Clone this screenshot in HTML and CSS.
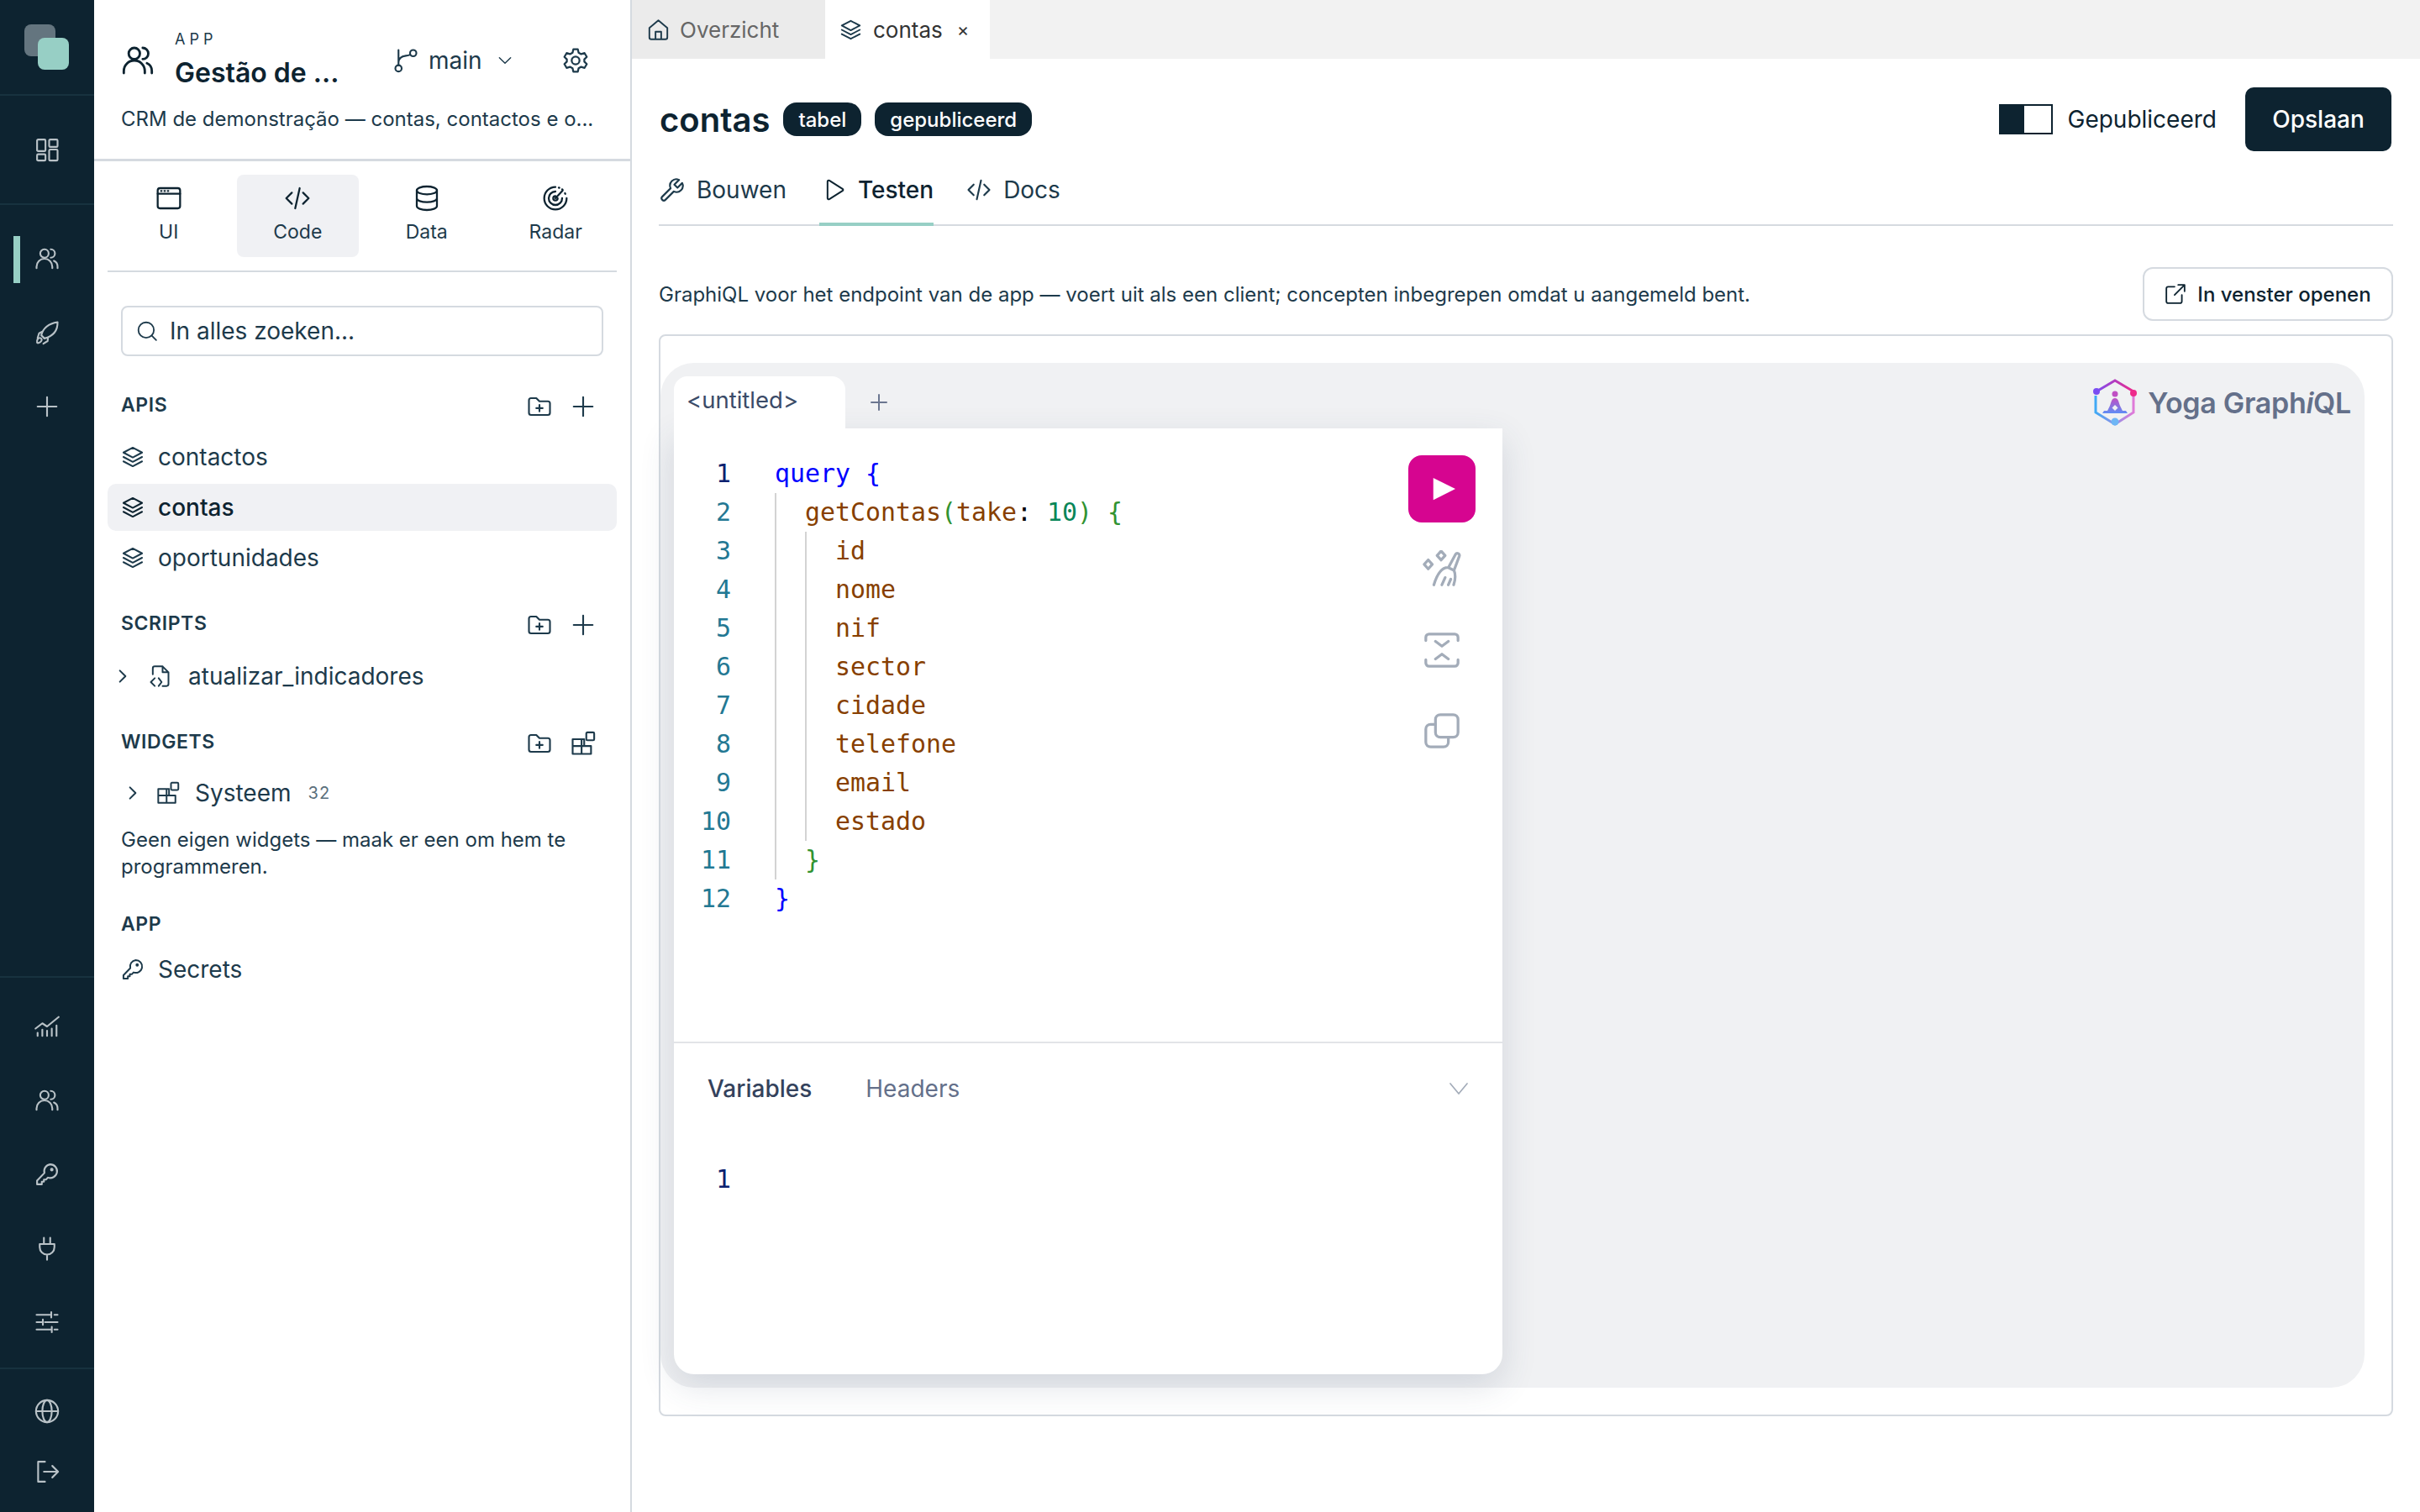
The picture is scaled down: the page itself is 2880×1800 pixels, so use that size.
FILE: index.html
```html
<!DOCTYPE html>
<html lang="nl">
<head>
    <meta charset="UTF-8">
    <title>contas</title>
    <link rel="stylesheet" href="styles.css">
</head>
<body>
    <!-- Shared icons -->
    <svg class="icon-defs" xmlns="http://www.w3.org/2000/svg">
        <defs>
            <symbol id="i-users" viewBox="0 0 24 24"><circle cx="9.500" cy="7" r="4"/><path d="M15.500 3a4 4 0 0 1 0 8M2 21v-1.500a7.500 7.500 0 0 1 15 0V21M18.500 14a6 6 0 0 1 3.500 5.500V21"/></symbol>
            <symbol id="i-layers" viewBox="0 0 24 24"><path d="M12 2.500 21.500 7.500 12 12.500 2.500 7.500zM2.500 12 12 17l9.500-5M2.500 16.500l9.500 5 9.500-5"/></symbol>
            <symbol id="i-folder" viewBox="0 0 24 24"><path d="M2 6a2 2 0 0 1 2-2h5l3 3h8a2 2 0 0 1 2 2v9a2 2 0 0 1-2 2H4a2 2 0 0 1-2-2zM12 10.500v6M9 13.500h6"/></symbol>
            <symbol id="i-plus" viewBox="0 0 24 24"><path d="M12 3v18M3 12h18"/></symbol>
            <symbol id="i-code" viewBox="0 0 24 24"><path d="M7 7l-5 5 5 5M17 7l5 5-5 5M14 3l-4 18"/></symbol>
            <symbol id="i-key" viewBox="0 0 24 24"><path d="M15 2.500a6.500 6.500 0 1 1-2.200 12.600L11 17H9v2H7v2.500H2.500V18l7-7.300A6.500 6.500 0 0 1 15 2.500z"/><circle cx="16.500" cy="7.500" r=".8"/></symbol>
            <symbol id="i-blocks" viewBox="0 0 24 24"><path d="M2 8h11v6.500h6.500V22H2zM2 14.500h17.500M10.500 8v14"/><rect x="15" y="1.500" width="7.500" height="7.500" rx="1"/></symbol>
            <symbol id="i-chevron" viewBox="0 0 24 24"><path d="M8 4l8 8-8 8"/></symbol>
        </defs>
    </svg>

    <div class="app">
        <nav class="rail">
            <div class="rail-logo"><span class="logo-back"></span><span class="logo-front"></span></div>
            <div class="rail-group rail-home">
                <a class="rail-item"><svg class="ic" viewBox="0 0 24 24"><rect x="2.500" y="2.500" width="8" height="11" rx="1"/><rect x="14" y="2.500" width="8" height="7" rx="1"/><rect x="2.500" y="16.500" width="8" height="6" rx="1"/><rect x="14" y="12" width="8" height="10.500" rx="1"/></svg></a>
            </div>
            <div class="rail-group rail-apps">
                <a class="rail-item active"><svg class="ic"><use href="#i-users"/></svg></a>
                <a class="rail-item"><svg class="ic" viewBox="0 0 24 24"><path d="M9.500 17.500 6.500 14.500C8 8.500 13 3.500 22 2c.2 8.500-5 13.500-12.500 15.500zM7.500 11 4.500 12.500 3 17M13 16.500 12.500 20 8.500 22.500"/><path d="M2.500 21.500c-.5-2.500 1-4.500 2.500-4.500s2.500 1.500 1.500 3-3.500 2.500-4 1.500z"/></svg></a>
                <a class="rail-item"><svg class="ic thin"><use href="#i-plus"/></svg></a>
            </div>
            <div class="rail-group rail-admin">
                <a class="rail-item"><svg class="ic" viewBox="0 0 24 24"><path d="M1 14 7.500 9l4.500 3L23 3M3 21v-3M7.500 21v-6M12 21v-5M16.500 21v-7M21 21V11"/></svg></a>
                <a class="rail-item"><svg class="ic"><use href="#i-users"/></svg></a>
                <a class="rail-item"><svg class="ic"><use href="#i-key"/></svg></a>
                <a class="rail-item"><svg class="ic" viewBox="0 0 24 24"><path d="M9 2v6M15 2v6M5 8h14v3a7 7 0 0 1-14 0zM12 18v5"/></svg></a>
                <a class="rail-item"><svg class="ic" viewBox="0 0 24 24"><path d="M2 5h14M19 5h3M16 2.500v5M2 12h5M10 12h12M8 9.500v5M2 19h14M19 19h3M16.500 16.500v5"/></svg></a>
            </div>
            <div class="rail-group rail-bottom">
                <a class="rail-item short"><svg class="ic" viewBox="0 0 24 24"><circle cx="12" cy="12" r="10.500"/><ellipse cx="12" cy="12" rx="4.500" ry="10.500"/><path d="M1.500 12h21"/></svg></a>
                <a class="rail-item short"><svg class="ic" viewBox="0 0 24 24"><path d="M10 2.500H3.500v19H10M9 12h13M17 6.500l5.500 5.500-5.500 5.500"/></svg></a>
            </div>
        </nav>

        <aside class="sidebar">
            <div class="app-head">
                <div class="app-row">
                    <svg class="ic head-icon"><use href="#i-users"/></svg>
                    <div class="app-titles">
                        <div class="app-label">APP</div>
                        <div class="app-name">Gestão de ...</div>
                    </div>
                    <div class="branch">
                        <svg class="ic branch-icon" viewBox="0 0 24 24"><circle cx="5" cy="19.500" r="3"/><circle cx="19" cy="5" r="3"/><path d="M5 16.500V2M5 14c0-4 3-6 7-6.500 2-.2 3.500-.7 4-1"/></svg>
                        <span>main</span>
                        <svg class="ic chev-down" viewBox="0 0 24 24"><path d="M4 8l8 8 8-8"/></svg>
                    </div>
                    <svg class="ic gear" viewBox="0 0 24 24"><circle cx="12" cy="12" r="3.500"/><path d="M10 2h4l.7 3 2.300 1.300 3-.9 2 3.400-2.200 2.200v2l2.200 2.200-2 3.400-3-.9L14.700 19l-.7 3h-4l-.7-3L7 17.700l-3 .9-2-3.400L4.200 13v-2L2 8.800l2-3.400 3 .9L9.300 5z"/></svg>
                </div>
                <p class="app-desc">CRM de demonstração — contas, contactos e o...</p>
            </div>

            <div class="mode-tabs">
                <a class="mode-tab">
                    <svg class="ic" viewBox="0 0 24 24"><rect x="2" y="3" width="20" height="18" rx="2"/><path d="M2 8h20M5 5.500h.5M8 5.500h.5M11 5.500h.5"/></svg>
                    UI
                </a>
                <a class="mode-tab active"><svg class="ic"><use href="#i-code"/></svg>Code</a>
                <a class="mode-tab">
                    <svg class="ic" viewBox="0 0 24 24"><ellipse cx="12" cy="5" rx="9" ry="3.500"/><path d="M3 5v14c0 2 4 3.500 9 3.500s9-1.500 9-3.500V5M3 12c0 2 4 3.500 9 3.500s9-1.500 9-3.500"/></svg>
                    Data
                </a>
                <a class="mode-tab">
                    <svg class="ic" viewBox="0 0 24 24"><path d="M12 2a10 10 0 1 0 10 10M12 6a6 6 0 1 0 6 6M12 10a2 2 0 1 0 2 2M12 12l6.500-7M15 2.500l.5.2M18 4l.4.4M20.500 7.500l.3.6"/></svg>
                    Radar
                </a>
            </div>

            <div class="search">
                <svg class="ic" viewBox="0 0 24 24"><circle cx="11" cy="11" r="8.500"/><path d="M17 17l5 5"/></svg>
                <span>In alles zoeken...</span>
            </div>

            <section class="tree-section apis">
                <div class="section-head">
                    <h3>APIS</h3>
                    <div class="section-actions">
                        <svg class="ic"><use href="#i-folder"/></svg>
                        <svg class="ic"><use href="#i-plus"/></svg>
                    </div>
                </div>
                <a class="tree-item"><svg class="ic"><use href="#i-layers"/></svg>contactos</a>
                <a class="tree-item selected"><svg class="ic"><use href="#i-layers"/></svg>contas</a>
                <a class="tree-item"><svg class="ic"><use href="#i-layers"/></svg>oportunidades</a>
            </section>

            <section class="tree-section scripts">
                <div class="section-head">
                    <h3>SCRIPTS</h3>
                    <div class="section-actions">
                        <svg class="ic"><use href="#i-folder"/></svg>
                        <svg class="ic"><use href="#i-plus"/></svg>
                    </div>
                </div>
                <a class="tree-item script-item">
                    <svg class="ic chev"><use href="#i-chevron"/></svg>
                    <svg class="ic" viewBox="0 0 24 24"><path d="M5 10V4a2 2 0 0 1 2-2h8l6 6v12a2 2 0 0 1-2 2h-4M15 2v6h6M7 14l-4 4 4 4M11 14l3 4-3 4"/></svg>
                    atualizar_indicadores
                </a>
            </section>

            <section class="tree-section widgets">
                <div class="section-head">
                    <h3>WIDGETS</h3>
                    <div class="section-actions">
                        <svg class="ic"><use href="#i-folder"/></svg>
                        <svg class="ic"><use href="#i-blocks"/></svg>
                    </div>
                </div>
                <a class="tree-item system-item">
                    <svg class="ic chev"><use href="#i-chevron"/></svg>
                    <svg class="ic"><use href="#i-blocks"/></svg>
                    Systeem
                    <span class="count">32</span>
                </a>
                <p class="empty-note">Geen eigen widgets — maak er een om hem te programmeren.</p>
            </section>

            <section class="tree-section app-section">
                <div class="section-head"><h3>APP</h3></div>
                <a class="tree-item"><svg class="ic"><use href="#i-key"/></svg>Secrets</a>
            </section>
        </aside>

        <main class="main">
            <div class="tabbar">
                <a class="doc-tab">
                    <svg class="ic" viewBox="0 0 24 24"><path d="M2.500 10 12 2l9.500 8v10a2 2 0 0 1-2 2h-15a2 2 0 0 1-2-2zM9 22v-8h6v8"/></svg>
                    Overzicht
                </a>
                <a class="doc-tab active">
                    <svg class="ic"><use href="#i-layers"/></svg>
                    contas
                    <span class="tab-close">×</span>
                </a>
            </div>

            <div class="content">
                <div class="title-row">
                    <h1>contas</h1>
                    <span class="badge">tabel</span>
                    <span class="badge">gepubliceerd</span>
                    <div class="title-actions">
                        <span class="toggle"><span class="toggle-on"></span></span>
                        <span class="toggle-label">Gepubliceerd</span>
                        <button class="save">Opslaan</button>
                    </div>
                </div>

                <div class="sub-tabs">
                    <a class="sub-tab">
                        <svg class="ic" viewBox="0 0 24 24"><path d="M21.500 5.500 17 10l-3-3 4.500-4.500a6 6 0 0 0-8 8L2.500 18.500a2.100 2.100 0 0 0 3 3l8-8a6 6 0 0 0 8-8z"/></svg>
                        Bouwen
                    </a>
                    <a class="sub-tab active">
                        <svg class="ic" viewBox="0 0 24 24"><path d="M5 3.500c0-1 1-1.500 1.800-1l13.500 8.500c.8.500.8 1.500 0 2L6.800 21.500c-.8.500-1.800 0-1.800-1z"/></svg>
                        Testen
                    </a>
                    <a class="sub-tab"><svg class="ic"><use href="#i-code"/></svg>Docs</a>
                </div>

                <div class="intro-row">
                    <p>GraphiQL voor het endpoint van de app — voert uit als een client; concepten inbegrepen omdat u aangemeld bent.</p>
                    <button class="open-btn">
                        <svg class="ic" viewBox="0 0 24 24"><path d="M11 4H4a2 2 0 0 0-2 2v14a2 2 0 0 0 2 2h13a2 2 0 0 0 2-2v-7M11 13 22 2M15 2h7v7"/></svg>
                        In venster openen
                    </button>
                </div>

                <div class="frame">
                    <div class="graphiql">
                        <div class="session">
                            <div class="session-tabs">
                                <span class="session-tab">&lt;untitled&gt;</span>
                                <svg class="ic session-add"><use href="#i-plus"/></svg>
                            </div>
                            <div class="session-card">
                                <div class="query-pane">
                                    <div class="gutter">
                                        <div class="current">1</div>
                                        <div>2</div><div>3</div><div>4</div><div>5</div><div>6</div>
                                        <div>7</div><div>8</div><div>9</div><div>10</div><div>11</div><div>12</div>
                                    </div>
                                    <div class="code">
                                        <div class="line"><span class="kw">query {</span></div>
                                        <div class="indent">
                                            <div class="line"><span class="fd">getContas</span><span class="br">(</span><span class="fd">take</span>: <span class="num">10</span><span class="br">)</span> <span class="br">{</span></div>
                                            <div class="indent">
                                                <div class="line fd">id</div>
                                                <div class="line fd">nome</div>
                                                <div class="line fd">nif</div>
                                                <div class="line fd">sector</div>
                                                <div class="line fd">cidade</div>
                                                <div class="line fd">telefone</div>
                                                <div class="line fd">email</div>
                                                <div class="line fd">estado</div>
                                            </div>
                                            <div class="line br">}</div>
                                        </div>
                                        <div class="line kw">}</div>
                                    </div>
                                    <div class="toolbar">
                                        <button class="run"><svg viewBox="0 0 24 24"><path d="M3 1.500v21L24 12z"/></svg></button>
                                        <svg class="ic tool" viewBox="0 0 24 24"><path d="M20.500 2.500c.8-1.300 2.800-.3 2.300 1.200L19.500 12.500c1 2.500.8 6-.2 9M19.500 12.500 16 10.800 20.500 2.500M16 10.800C12 10.500 9 15 7 21.500M12 21.500l2-4.500M16 21.500l1.500-3.500"/><path d="M11.500 .5l2.500 2.800-2.500 2.800L9 3.300zM3.500 6 6 8.800l-2.500 2.800L1 8.800z"/></svg>
                                        <svg class="ic tool" viewBox="0 0 24 24"><path d="M2 6V4a2 2 0 0 1 2-2h16a2 2 0 0 1 2 2v2M2 18v2a2 2 0 0 0 2 2h16a2 2 0 0 0 2-2v-2M8 6.500l4 3 4-3M8 17.500l4-3 4 3"/></svg>
                                        <svg class="ic tool" viewBox="0 0 24 24"><rect x="8" y="2" width="14" height="14" rx="3"/><path d="M8 8H5a3 3 0 0 0-3 3v8a3 3 0 0 0 3 3h8a3 3 0 0 0 3-3v-3"/></svg>
                                    </div>
                                </div>
                                <div class="vars-pane">
                                    <div class="vars-tabs">
                                        <span class="vars-tab active">Variables</span>
                                        <span class="vars-tab">Headers</span>
                                        <svg class="ic vars-chev" viewBox="0 0 24 24"><path d="M2 6l10 12L22 6"/></svg>
                                    </div>
                                    <div class="vars-line">1</div>
                                </div>
                            </div>
                        </div>

                        <div class="yoga">
                            <svg class="yoga-logo" viewBox="0 0 54 56">
                                <defs>
                                    <linearGradient id="yoga-top" x1="0" y1="0" x2="1" y2="0"><stop offset="0" stop-color="#7c4df0"/><stop offset="1" stop-color="#ee2a8b"/></linearGradient>
                                    <linearGradient id="yoga-bot" x1="0" y1="0" x2="1" y2="0"><stop offset="0" stop-color="#3fa9f5"/><stop offset="1" stop-color="#e07ad8"/></linearGradient>
                                    <linearGradient id="yoga-man" x1="0" y1="0" x2="0" y2="1"><stop offset="0" stop-color="#c04fc4"/><stop offset="1" stop-color="#5f8df5"/></linearGradient>
                                </defs>
                                <path class="yoga-ring" stroke="url(#yoga-top)" d="M5 15 27 2l22 13"/>
                                <path class="yoga-ring" stroke="url(#yoga-bot)" d="M4 20v20l23 14 22-14V20"/>
                                <circle cx="5" cy="15" r="4" fill="#7a4df2"/>
                                <circle cx="49" cy="17" r="4" fill="#ee2a8b"/>
                                <circle cx="27" cy="51" r="4.500" fill="#6fb6f5"/>
                                <circle cx="27" cy="18" r="3.500" fill="#c04fc4"/>
                                <path fill="url(#yoga-man)" d="M27 23c4 0 4.500 5 6 9l3 6H18l3-6c1.500-4 2-9 6-9zM14 38h26l2 3H12z"/>
                                <path fill="#f0f1f3" d="M27 31l3.500 3.500L27 38l-3.500-3.500z"/>
                            </svg>
                            <span class="yoga-name">Yoga Graph<em>i</em>QL</span>
                        </div>
                    </div>
                </div>
            </div>
        </main>
    </div>
</body>
</html>
```
FILE: styles.css
```css
* {
    box-sizing: border-box;
}

body {
    margin: 0;
    font-family: Inter, "Noto Sans", sans-serif;
    color: #1d3a4b;
    background-color: #fff;
}

p, h1, h3 {
    margin: 0;
}

.icon-defs {
    width: 0;
    height: 0;
    display: block;
}

.app {
    display: flex;
    width: 2880px;
    height: 1800px;
    overflow: hidden;
}

/* Icons take their colour from the text */
.ic {
    width: 30px;
    height: 30px;
    flex-shrink: 0;
    fill: none;
    stroke: currentColor;
    stroke-width: 1.7;
    stroke-linecap: round;
    stroke-linejoin: round;
}

/* Left rail */
.rail {
    width: 112px;
    flex-shrink: 0;
    height: 100%;
    display: flex;
    flex-direction: column;
    background-color: #0d2330;
    color: #b9c2c7;
}

.rail-logo {
    height: 114px;
    border-bottom: 2px solid #17323f;
    position: relative;
}

.logo-back,
.logo-front {
    position: absolute;
    display: block;
    width: 37px;
    height: 38px;
    border-radius: 8px;
}

.logo-back {
    left: 29px;
    top: 29px;
    background-color: #64757f;
}

.logo-front {
    left: 45px;
    top: 45px;
    background-color: #97cfc5;
}

.rail-group {
    display: flex;
    flex-direction: column;
    border-bottom: 2px solid #17323f;
}

.rail-home {
    height: 130px;
    justify-content: center;
}

.rail-apps {
    flex: 1;
    padding-top: 20px;
}

.rail-admin {
    padding: 14px 0 0;
    height: 466px;
}

.rail-bottom {
    border-bottom: none;
    height: 170px;
    padding-top: 14px;
}

.rail-item {
    height: 88px;
    display: flex;
    align-items: center;
    justify-content: center;
    position: relative;
}

.rail-item.short {
    height: 72px;
}

.rail-item.active::before {
    content: "";
    position: absolute;
    left: 16px;
    top: 17px;
    width: 8px;
    height: 56px;
    background-color: #97cfc5;
}

/* Sidebar */
.sidebar {
    width: 640px;
    flex-shrink: 0;
    height: 100%;
    border-right: 2px solid #d5dae0;
}

.app-head {
    height: 192px;
    padding: 35px 32px 0;
    border-bottom: 3px solid #d5dae0;
}

.app-row {
    display: flex;
    align-items: center;
    height: 80px;
}

.head-icon {
    width: 40px;
    height: 40px;
    margin-right: 24px;
    margin-bottom: 6px;
    color: #0d2330;
}

.app-titles {
    width: 260px;
}

.app-label {
    font-size: 18px;
    line-height: 24px;
    letter-spacing: 5px;
    color: #1d3a4b;
}

.app-name {
    font-size: 32px;
    font-weight: 600;
    line-height: 56px;
    color: #0d2330;
}

.branch {
    display: flex;
    align-items: center;
    margin-bottom: 6px;
    font-size: 28px;
    color: #1d3a4b;
}

.branch-icon {
    margin-right: 12px;
}

.chev-down {
    width: 20px;
    height: 20px;
    margin-left: 17px;
}

.gear {
    margin-left: 58px;
    margin-bottom: 6px;
    width: 32px;
    height: 32px;
}

.app-desc {
    margin-top: 10px;
    font-size: 24px;
    line-height: 34px;
    white-space: nowrap;
}

.mode-tabs {
    margin: 16px 16px 0;
    padding-bottom: 16px;
    border-bottom: 2px solid #d5dae0;
    display: grid;
    grid-template-columns: repeat(4, 1fr);
    gap: 8px;
}

.mode-tab {
    height: 98px;
    display: flex;
    flex-direction: column;
    align-items: center;
    justify-content: flex-end;
    padding-bottom: 14px;
    gap: 8px;
    font-size: 23px;
    line-height: 32px;
    border-radius: 8px;
}

.mode-tab .ic {
    width: 32px;
    height: 32px;
    color: #0d2330;
}

.mode-tab.active {
    background-color: #f0f1f4;
}

.search {
    margin: 40px 32px 0;
    height: 60px;
    padding: 0 16px;
    display: flex;
    align-items: center;
    gap: 14px;
    border: 2px solid #d5dae0;
    border-radius: 8px;
    font-size: 28px;
}

.search .ic {
    width: 26px;
    height: 26px;
}

.tree-section {
    padding: 0 16px;
}

.apis {
    margin-top: 40px;
}

.scripts {
    margin-top: 32px;
}

.widgets {
    margin-top: 32px;
}

.app-section {
    margin-top: 34px;
}

.section-head {
    height: 40px;
    padding: 0 27px 0 16px;
    display: flex;
    align-items: center;
    justify-content: space-between;
}

.section-head h3 {
    font-size: 23px;
    font-weight: 600;
    letter-spacing: 0.6px;
    margin-top: -4px;
}

.section-actions {
    display: flex;
    gap: 22px;
    margin-right: -2px;
}

.tree-item {
    height: 56px;
    margin-top: 4px;
    padding: 0 16px;
    display: flex;
    align-items: center;
    gap: 16px;
    font-size: 28px;
    border-radius: 10px;
}

.tree-item .ic {
    width: 28px;
    height: 28px;
}

.apis .section-head {
    margin-bottom: 12px;
}

.tree-item.selected {
    background-color: #f0f1f4;
    color: #0d2330;
    font-weight: 500;
}

.scripts .section-head {
    margin-bottom: 13px;
}

.widgets .section-head {
    margin-bottom: 11px;
}

.script-item {
    padding-left: 8px;
    gap: 20px;
}

.system-item {
    padding-left: 20px;
    gap: 18px;
}

.tree-item .chev {
    width: 20px;
    height: 20px;
    stroke-width: 2.400;
}

.count {
    margin-left: 2px;
    font-size: 20px;
    color: #5b6f7c;
    letter-spacing: 1px;
}

.empty-note {
    margin: 12px 16px 0;
    font-size: 24px;
    line-height: 32px;
}

/* Main area */
.main {
    flex: 1;
    min-width: 0;
    display: flex;
    flex-direction: column;
}

.tabbar {
    height: 70px;
    display: flex;
    background-color: #f2f2f2;
}

.doc-tab {
    height: 100%;
    display: flex;
    align-items: center;
    gap: 12px;
    padding: 0 18px;
    font-size: 26px;
    color: #666;
    background-color: #ebebeb;
    width: 230px;
}

.doc-tab .ic {
    width: 27px;
    height: 27px;
    color: #1d3a4b;
}

.doc-tab.active {
    width: 196px;
    padding-left: 17px;
    gap: 13px;
    background-color: #fff;
    color: #333;
}

.tab-close {
    font-size: 22px;
    margin-left: 4px;
}

.content {
    flex: 1;
    padding: 34px 32px 0;
}

.title-row {
    height: 76px;
    display: flex;
    align-items: center;
    gap: 16px;
}

h1 {
    font-size: 40px;
    font-weight: 600;
    color: #0d2330;
    margin-left: 1px;
}

.badge {
    height: 40px;
    padding: 0 18px;
    display: flex;
    align-items: center;
    border-radius: 16px;
    background-color: #0d2330;
    color: #fff;
    font-size: 24px;
    font-weight: 500;
}

.title-actions {
    margin-left: auto;
    margin-right: 2px;
    display: flex;
    align-items: center;
}

.toggle {
    width: 64px;
    height: 36px;
    border: 2px solid #0d2330;
    background-color: #fff;
    display: block;
}

.toggle-on {
    display: block;
    width: 28px;
    height: 100%;
    background-color: #0d2330;
}

.toggle-label {
    margin-left: 18px;
    font-size: 28px;
    color: #0d2330;
}

.save {
    margin-left: 34px;
    width: 174px;
    height: 76px;
    border: none;
    border-radius: 10px;
    background-color: #0d2330;
    color: #fff;
    font-family: inherit;
    font-size: 28px;
    font-weight: 500;
}

.sub-tabs {
    margin-top: 10px;
    height: 79px;
    display: flex;
    gap: 38px;
    border-bottom: 2px solid #d5dae0;
}

.sub-tab {
    height: 79px;
    display: flex;
    align-items: center;
    gap: 14px;
    font-size: 28px;
    padding-bottom: 7px;
    margin-left: 1px;
}

.sub-tab .ic {
    width: 30px;
    height: 30px;
}

.sub-tab.active {
    color: #0d2330;
    font-weight: 500;
    border-bottom: 4px solid #97cfc5;
    padding-left: 4px;
    padding-bottom: 3px;
}

.sub-tab.active .ic {
    width: 28px;
}

.intro-row {
    margin-top: 49px;
    display: flex;
    align-items: center;
    justify-content: space-between;
    font-size: 24px;
}

.open-btn {
    width: 298px;
    height: 64px;
    display: flex;
    align-items: center;
    justify-content: center;
    gap: 13px;
    border: 2px solid #d5dae0;
    border-radius: 12px;
    background-color: #fff;
    color: #0d2330;
    font-family: inherit;
    font-size: 24px;
    font-weight: 500;
}

.open-btn .ic {
    width: 26px;
    height: 26px;
}

.frame {
    margin-top: 16px;
    height: 1288px;
    padding: 32px 32px 32px 0;
    border: 2px solid #d5dae0;
    border-radius: 8px;
}

.graphiql {
    height: 100%;
    padding: 16px;
    display: flex;
    justify-content: space-between;
    background-color: #f0f1f3;
    border-radius: 40px;
}

.session {
    width: 986px;
    display: flex;
    flex-direction: column;
}

.session-tabs {
    height: 62px;
    display: flex;
    position: relative;
    z-index: 1;
}

.session-tab {
    width: 204px;
    padding-left: 15px;
    font-size: 27.500px;
    line-height: 56px;
    background-color: #fff;
    border-radius: 16px 16px 0 0;
    color: #3b4b68;
}

.session-add {
    width: 24px;
    height: 24px;
    margin: 19px 0 0 28px;
    color: #6b7690;
    stroke-width: 2;
}

.session-card {
    flex: 1;
    background-color: #fff;
    border-radius: 0 0 24px 24px;
    box-shadow: 0 14px 40px rgba(59, 76, 106, 0.16);
    display: flex;
    flex-direction: column;
}

.query-pane {
    height: 732px;
    padding: 31px 32px 0 0;
    display: flex;
    font-family: "DejaVu Sans Mono", "Liberation Mono", monospace;
    font-size: 29.900px;
    line-height: 46px;
    border-bottom: 2px solid #e2e4e8;
}

.gutter {
    width: 68px;
    margin-right: 52px;
    text-align: right;
    color: #237893;
}

.gutter .current {
    color: #0b216f;
}

.code {
    flex: 1;
    color: #000;
}

.indent {
    border-left: 2px solid #d3d3d3;
    padding-left: 34px;
}

.kw {
    color: #0000ff;
}

.fd {
    color: #873f00;
}

.br {
    color: #319331;
}

.num {
    color: #098658;
}

.toolbar {
    width: 80px;
    padding-top: 1px;
    display: flex;
    flex-direction: column;
    align-items: center;
}

.run {
    width: 80px;
    height: 80px;
    border: none;
    border-radius: 16px;
    background-color: #d60590;
    display: flex;
    align-items: center;
    justify-content: center;
    padding: 0 0 0 2px;
    margin-bottom: 33px;
}

.run svg {
    width: 30px;
    height: 30px;
    fill: #fff;
}

.tool {
    width: 46px;
    height: 46px;
    margin-bottom: 50px;
    color: #a3acb9;
}

.vars-pane {
    flex: 1;
}

.vars-tabs {
    height: 108px;
    padding: 0 40px;
    display: flex;
    align-items: center;
    gap: 64px;
    font-size: 28px;
    color: #64708a;
}

.vars-tab.active {
    color: #34425c;
    font-weight: 500;
}

.vars-chev {
    margin-left: auto;
    width: 24px;
    height: 24px;
    color: #a3acb9;
}

.vars-line {
    width: 68px;
    margin-top: 31px;
    text-align: right;
    font-family: "DejaVu Sans Mono", "Liberation Mono", monospace;
    font-size: 29.900px;
    line-height: 46px;
    color: #0b216f;
}

.yoga {
    display: flex;
    align-items: center;
    gap: 12px;
    height: 58px;
    margin-top: 2px;
}

.yoga-logo {
    width: 54px;
    height: 56px;
}

.yoga-ring {
    fill: none;
    stroke-width: 3;
}

.yoga-name {
    font-size: 34px;
    font-weight: 600;
    color: #64708a;
    letter-spacing: -0.3px;
}
```
